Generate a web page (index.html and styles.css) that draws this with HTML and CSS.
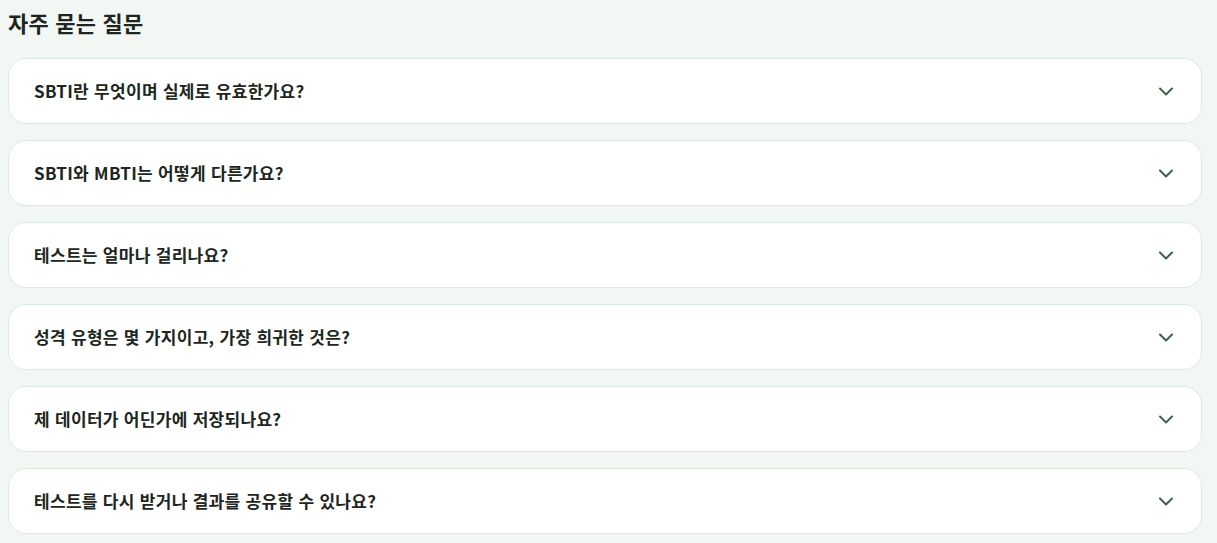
FILE: index.html
```html
<!DOCTYPE html>
<html lang="ko">
<head>
<meta charset="utf-8">
<title>자주 묻는 질문</title>
<link rel="stylesheet" href="styles.css">
</head>
<body>
<section class="faq">
  <h2 class="faq-title">자주 묻는 질문</h2>
  <div class="faq-list">
    <div class="faq-item"><span class="faq-q">SBTI란 무엇이며 실제로 유효한가요?</span><svg class="chev" viewBox="0 0 20 20" width="20" height="20"><path d="M4 7.5l6 6 6-6"/></svg></div>
    <div class="faq-item"><span class="faq-q">SBTI와 MBTI는 어떻게 다른가요?</span><svg class="chev" viewBox="0 0 20 20" width="20" height="20"><path d="M4 7.5l6 6 6-6"/></svg></div>
    <div class="faq-item"><span class="faq-q">테스트는 얼마나 걸리나요?</span><svg class="chev" viewBox="0 0 20 20" width="20" height="20"><path d="M4 7.5l6 6 6-6"/></svg></div>
    <div class="faq-item"><span class="faq-q">성격 유형은 몇 가지이고, 가장 희귀한 것은?</span><svg class="chev" viewBox="0 0 20 20" width="20" height="20"><path d="M4 7.5l6 6 6-6"/></svg></div>
    <div class="faq-item"><span class="faq-q">제 데이터가 어딘가에 저장되나요?</span><svg class="chev" viewBox="0 0 20 20" width="20" height="20"><path d="M4 7.5l6 6 6-6"/></svg></div>
    <div class="faq-item"><span class="faq-q">테스트를 다시 받거나 결과를 공유할 수 있나요?</span><svg class="chev" viewBox="0 0 20 20" width="20" height="20"><path d="M4 7.5l6 6 6-6"/></svg></div>
  </div>
</section>
</body>
</html>
```
FILE: styles.css
```css
html, body {
  background: #f3f7f4;
}
body {
  margin: 8px 15px 8px 8px;
  font-family: "Noto Sans CJK KR", "Noto Sans", sans-serif;
  color: #1d2620;
}
.faq-title {
  margin: 0 0 22px 0;
  font-size: 22px;
  line-height: 28px;
  font-weight: 700;
  letter-spacing: 0.2px;
  color: #1d2620;
}
.faq-list {
  display: flex;
  flex-direction: column;
  gap: 16px;
}
.faq-item {
  display: flex;
  align-items: center;
  justify-content: space-between;
  background: #ffffff;
  border: 1px solid #dde8e0;
  border-radius: 18px;
  padding: 20px 25px;
  height: 24px;
}
.faq-q {
  font-size: 17px;
  line-height: 24px;
  font-weight: 700;
  letter-spacing: 0.3px;
  color: #1d2620;
}
.chev {
  fill: none;
  stroke: #3e5e49;
  stroke-width: 2;
  stroke-linecap: round;
  stroke-linejoin: round;
}
```
